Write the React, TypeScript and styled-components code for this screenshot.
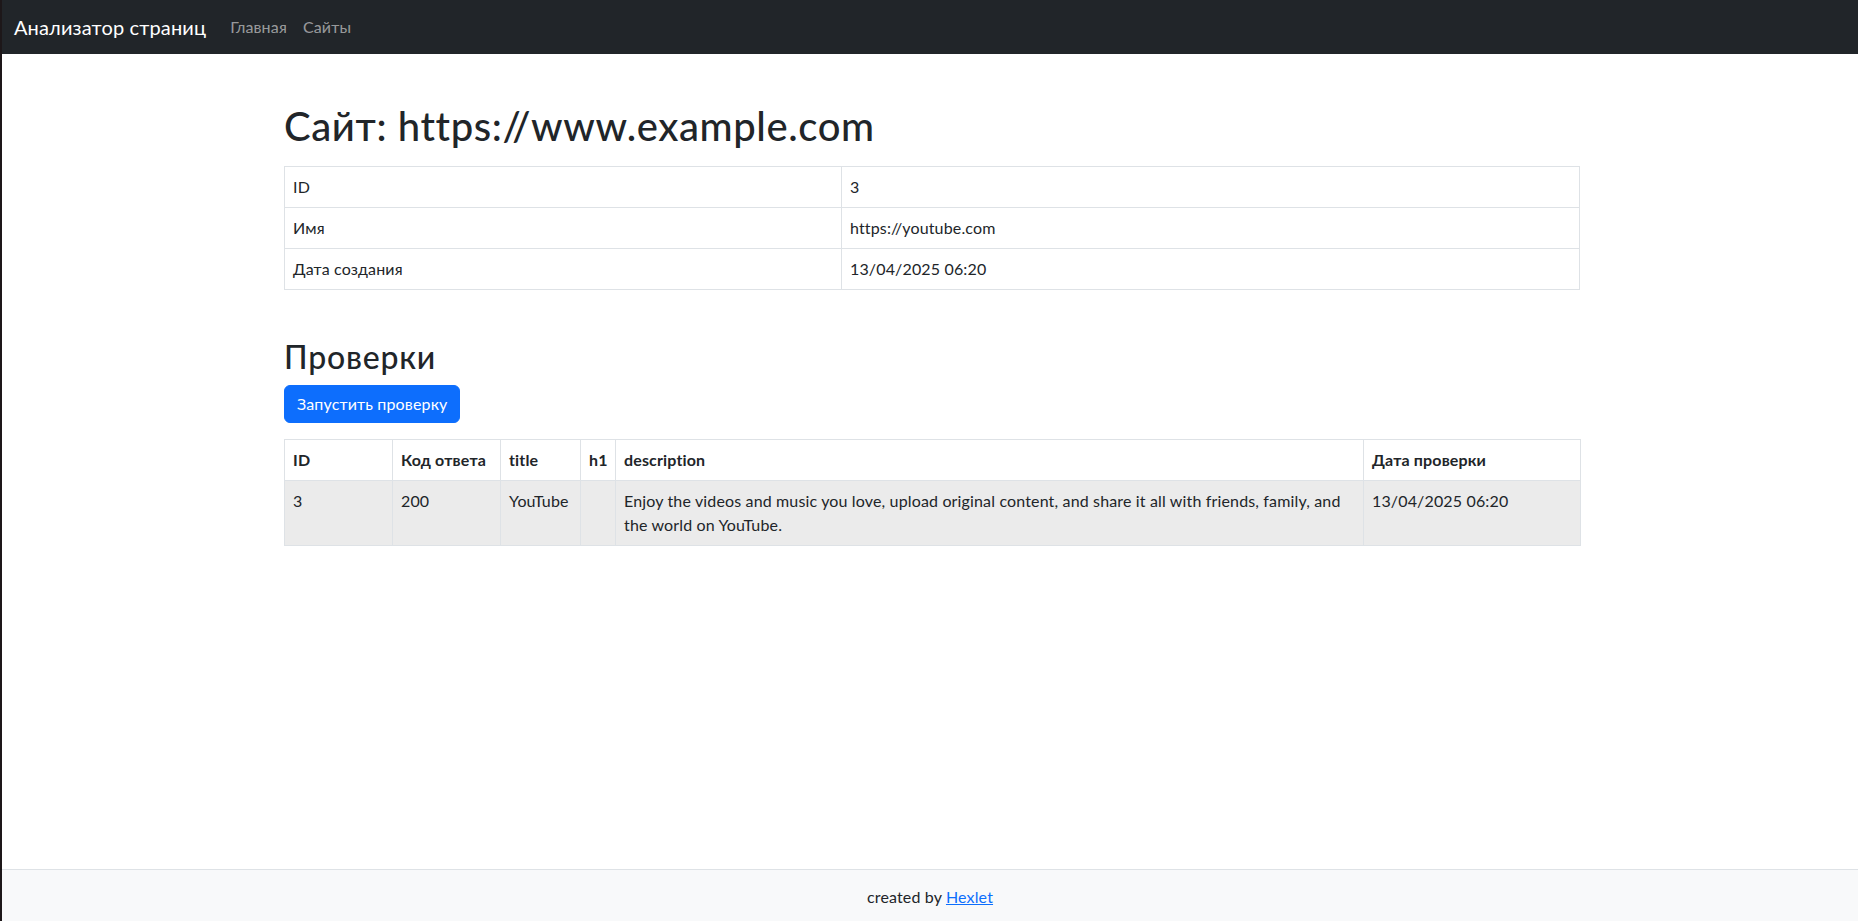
import React from "react";
import styled, { createGlobalStyle } from "styled-components";

const GlobalStyle = createGlobalStyle`
  *, *::before, *::after { box-sizing: border-box; }
  html, body { margin: 0; padding: 0; }
  body {
    font-family: "Lato", "Noto Sans", "Liberation Sans", sans-serif;
    font-size: 16px;
    line-height: 24px;
    letter-spacing: 0.15px;
    color: #212529;
    background: #ffffff;
    border-left: 2px solid #1d1719;
  }
`;

const Page = styled.div`
  min-height: 100vh;
  display: flex;
  flex-direction: column;
`;

const Navbar = styled.nav`
  height: 54px;
  background: #212529;
  display: flex;
  align-items: center;
  padding: 0 12px;
`;

const Brand = styled.a`
  font-size: 20px;
  line-height: 30px;
  color: #ffffff;
  text-decoration: none;
  margin-right: 16px;
`;

const NavLink = styled.a`
  font-size: 16px;
  line-height: 24px;
  padding: 8px;
  color: rgba(255, 255, 255, 0.55);
  text-decoration: none;
`;

const Main = styled.main`
  flex: 1;
  padding-left: 4px;
`;

const Container = styled.div`
  max-width: 1320px;
  margin: 48px auto 0;
  padding: 0 12px;
`;

const Title = styled.h1`
  font-size: 40px;
  font-weight: 500;
  line-height: 48px;
  letter-spacing: 0.015em;
  margin: 0 0 16px;
`;

const SectionTitle = styled.h2`
  font-size: 32px;
  font-weight: 500;
  line-height: 38.4px;
  letter-spacing: 0.025em;
  margin: 48px 0 9px;
`;

const Table = styled.table`
  width: 100%;
  border-collapse: collapse;
  table-layout: fixed;
  margin-bottom: 16px;
`;

const Cell = styled.td<{ $head?: boolean }>`
  border: 1px solid #dee2e6;
  padding: 8px;
  line-height: 24px;
  vertical-align: top;
  text-align: left;
  font-weight: ${(p) => (p.$head ? 700 : 400)};
  white-space: ${(p) => (p.$head ? "nowrap" : "normal")};
`;

const Row = styled.tr<{ $striped?: boolean }>`
  background: ${(p) => (p.$striped ? "#ebebeb" : "#ffffff")};
`;

const ActionForm = styled.form`
  margin: 0 0 16px;
`;

const Button = styled.button`
  display: block;
  font-family: inherit;
  font-size: 16px;
  line-height: 24px;
  letter-spacing: inherit;
  padding: 6px 12px;
  color: #ffffff;
  background: #0d6efd;
  border: 1px solid #0d6efd;
  border-radius: 6px;
  cursor: pointer;
`;

const Footer = styled.footer`
  background: #f8f9fa;
  border-top: 1px solid #dee2e6;
  padding: 15px 0 12px;
  text-align: center;
  line-height: 24px;
`;

const FooterLink = styled.a`
  color: #0d6efd;
  text-decoration: underline;
`;

const infoRows = [
  ["ID", "3"],
  ["Имя", "https://youtube.com"],
  ["Дата создания", "13/04/2025 06:20"],
];

const checkCols = [
  { label: "ID", width: 108 },
  { label: "Код ответа", width: 108 },
  { label: "title", width: 80 },
  { label: "h1", width: 35 },
  { label: "description", width: 748 },
  { label: "Дата проверки", width: 217 },
];

const checks = [
  {
    id: "3",
    code: "200",
    title: "YouTube",
    h1: "",
    description:
      "Enjoy the videos and music you love, upload original content, and share it all with friends, family, and the world on YouTube.",
    date: "13/04/2025 06:20",
  },
];

export default function App() {
  return (
    <Page>
      <GlobalStyle />
      <Navbar>
        <Brand href="#">Анализатор страниц</Brand>
        <NavLink href="#">Главная</NavLink>
        <NavLink href="#">Сайты</NavLink>
      </Navbar>
      <Main>
        <Container>
          <Title>Сайт: https://www.example.com</Title>
          <Table>
            <colgroup>
              <col style={{ width: 557 }} />
              <col />
            </colgroup>
            <tbody>
              {infoRows.map(([k, v]) => (
                <Row key={k}>
                  <Cell>{k}</Cell>
                  <Cell>{v}</Cell>
                </Row>
              ))}
            </tbody>
          </Table>
          <SectionTitle>Проверки</SectionTitle>
          <ActionForm onSubmit={(e) => e.preventDefault()}>
            <Button type="submit">Запустить проверку</Button>
          </ActionForm>
          <Table>
            <colgroup>
              {checkCols.map((c) => (
                <col key={c.label} style={{ width: c.width }} />
              ))}
            </colgroup>
            <thead>
              <Row>
                {checkCols.map((c) => (
                  <Cell as="th" $head key={c.label}>
                    {c.label}
                  </Cell>
                ))}
              </Row>
            </thead>
            <tbody>
              {checks.map((c) => (
                <Row $striped key={c.id}>
                  <Cell>{c.id}</Cell>
                  <Cell>{c.code}</Cell>
                  <Cell>{c.title}</Cell>
                  <Cell>{c.h1}</Cell>
                  <Cell>{c.description}</Cell>
                  <Cell>{c.date}</Cell>
                </Row>
              ))}
            </tbody>
          </Table>
        </Container>
      </Main>
      <Footer>
        created by <FooterLink href="#">Hexlet</FooterLink>
      </Footer>
    </Page>
  );
}
